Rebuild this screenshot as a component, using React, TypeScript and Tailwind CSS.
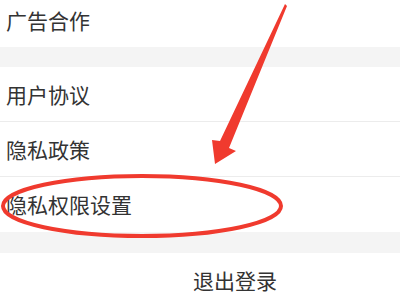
import React from 'react';

const font = { fontFamily: '"Noto Sans CJK SC", "Noto Sans", sans-serif' };

const Row: React.FC<{ label: string; border?: boolean; className?: string }> = ({ label, border, className }) => (
  <div className={`flex items-center bg-white pl-[6px] ${border ? 'border-b border-[#ececec]' : ''} ${className ?? 'h-[55px]'}`}>
    <span className="text-[21px] text-[#333] leading-none">{label}</span>
  </div>
);

const Annotation: React.FC = () => (
  <svg className="absolute inset-0 pointer-events-none" width={400} height={300} viewBox="0 0 400 300">
    <polygon
      points="285,4 287,6 229,148 236,151 215,164 212,140 220,141"
      fill="#f03a2e"
    />
    <ellipse cx={142} cy={206} rx={139} ry={30} fill="none" stroke="#f03a2e" strokeWidth={4} />
  </svg>
);

export default function App() {
  return (
    <div className="relative w-[400px] h-[300px] overflow-hidden bg-white" style={font}>
      <div className="flex flex-col">
        <Row label="广告合作" className="h-[47px] pb-[6px]" />
        <div className="h-[20px] bg-[#f4f4f4]" />
        <Row label="用户协议" border />
        <Row label="隐私政策" border />
        <Row label="隐私权限设置" />
        <div className="h-[21px] bg-[#f4f4f4]" />
        <div className="h-[55px] flex items-center justify-center pl-[70px] bg-white">
          <span className="text-[21px] text-[#333] leading-none">退出登录</span>
        </div>
      </div>
      <Annotation />
    </div>
  );
}
